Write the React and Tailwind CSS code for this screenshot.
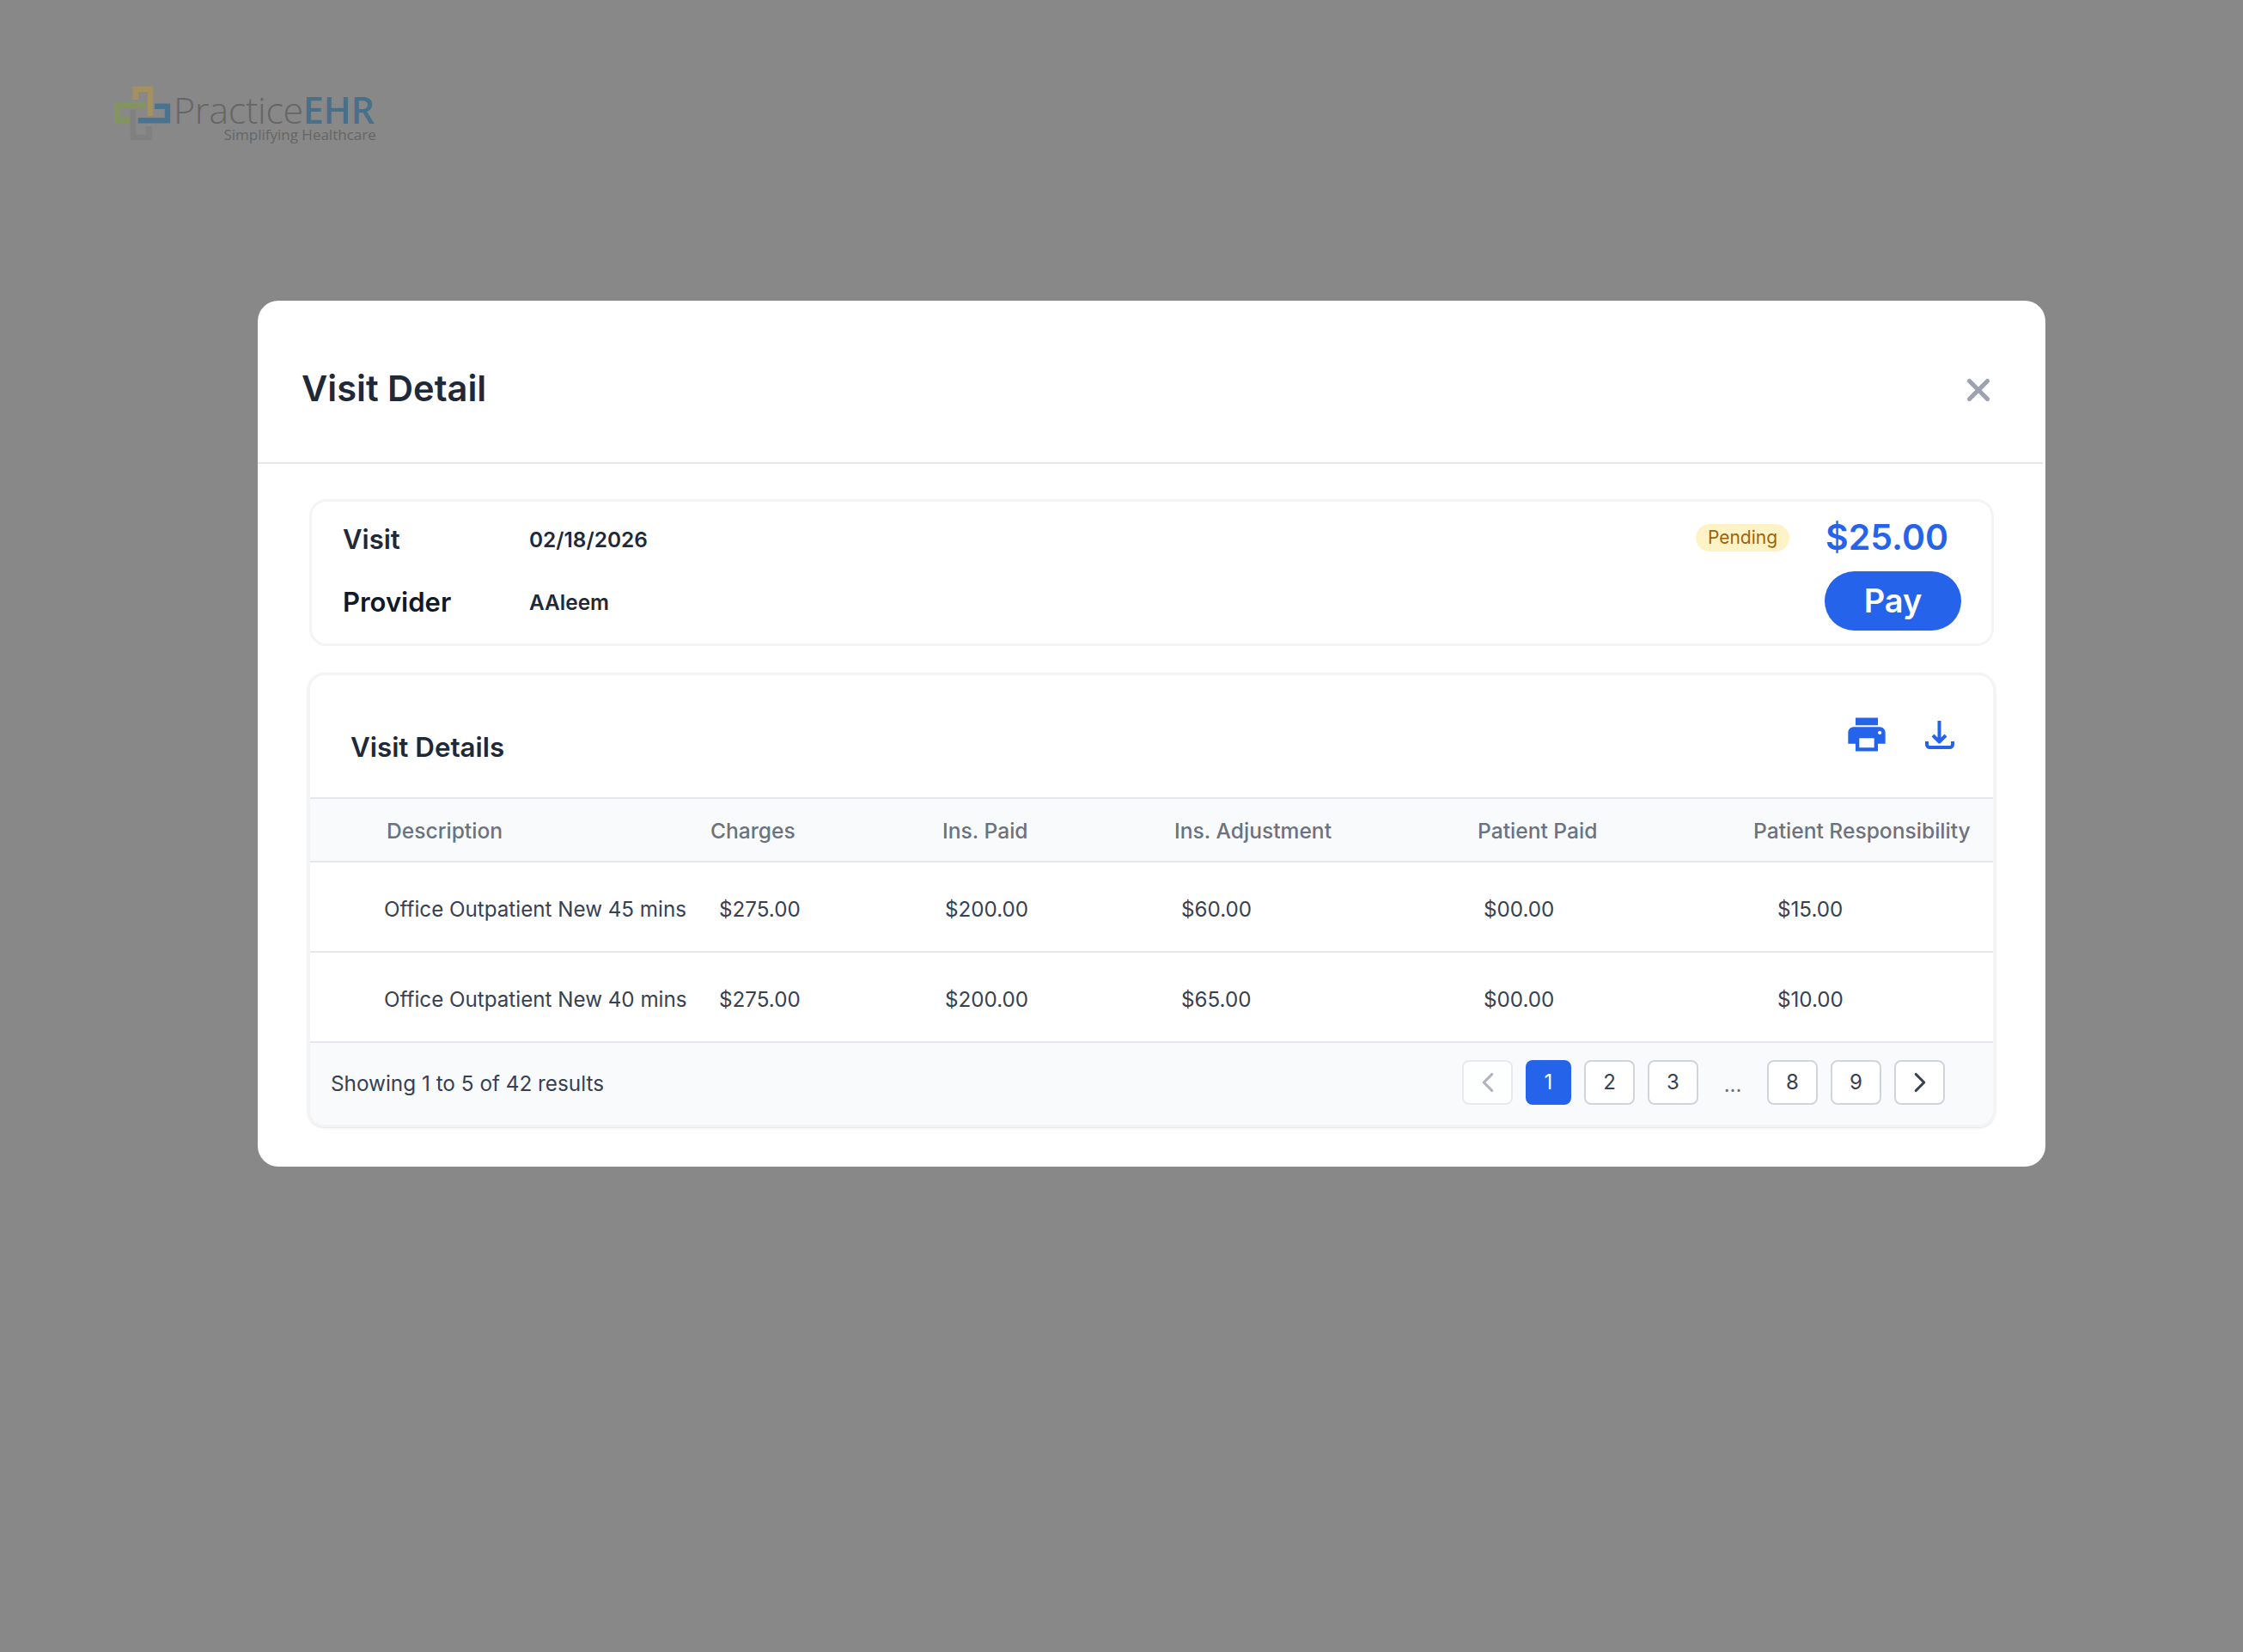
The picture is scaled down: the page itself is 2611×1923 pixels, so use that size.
import { ChevronLeft, ChevronRight, X } from "lucide-react";

const rows = [
  ["Office Outpatient New 45 mins", "$275.00", "$200.00", "$60.00", "$00.00", "$15.00"],
  ["Office Outpatient New 40 mins", "$275.00", "$200.00", "$65.00", "$00.00", "$10.00"],
];

const headers = ["Description", "Charges", "Ins. Paid", "Ins. Adjustment", "Patient Paid", "Patient Responsibility"];

// body cells sit a little off from their header, same as the design
const cellOffsets = ["ml-[-3px]", "ml-[10px]", "ml-[3px]", "ml-[8px]", "ml-[7px]", "ml-[28px]"];

function Logo() {
  return (
    <div className="flex items-start h-[70px]">
      <svg width="66" height="64" viewBox="133 100 66 64" fill="none" strokeWidth="6.5" className="shrink-0">
        <path d="M157.7 116V103.7H175V135" stroke="#a5905f" />
        <path d="M170 122.7H136.7V139.7H151" stroke="#84945f" />
        <path d="M155 127.7V160.3H173.3V147" stroke="#808080" />
        <path d="M180 123.7H195V140.3H160.7" stroke="#4a7390" />
      </svg>
      <div className="ml-[3px] flex flex-col items-end mt-[8px] font-['Open_Sans',sans-serif]">
        <div className="text-[43px] leading-[40px] font-light tracking-[-0.3px] text-[#666666] whitespace-nowrap">
          Practice<span className="font-semibold text-[#48708a]">EHR</span>
        </div>
        <div className="text-[17px] leading-[17px] mr-[-2px] text-[#666666] whitespace-nowrap">Simplifying Healthcare</div>
      </div>
    </div>
  );
}

function PageBtn({ children, active, muted }) {
  if (active) {
    return (
      <button className="w-[53px] h-[52px] rounded-[8px] bg-[#2563eb] text-white text-[24px] flex items-center justify-center">
        {children}
      </button>
    );
  }
  return (
    <button
      className={`w-[59px] h-[52px] rounded-[8px] border-2 bg-white text-[#374151] text-[24px] flex items-center justify-center ${
        muted ? "border-[#e5e7eb] opacity-80" : "border-[#d1d5db]"
      }`}
    >
      {children}
    </button>
  );
}

export default function App() {
  return (
    <div className="min-h-screen bg-[#888888] font-[Inter,sans-serif] pt-[100px] pl-[133px] overflow-hidden">
      <Logo />

      <div className="mt-[180px] ml-[167px] w-[2081px] h-[1008px] bg-white rounded-[24px]">
        {/* header */}
        <div className="h-[190px] mr-[3px] border-b-2 border-[#e5e7eb] flex items-start justify-between pl-[51px] pr-[54px]">
          <h2 className="mt-[78px] text-[41.6px] leading-[48px] font-semibold text-[#1f2937]">Visit Detail</h2>
          <X size={42} strokeWidth={3} className="mt-[83px] text-[#9ca3af]" />
        </div>

        <div className="pt-[41px] pl-[60px]">
          {/* visit summary */}
          <div className="w-[1961px] h-[171px] border-[3px] border-[#f3f4f6] rounded-[20px] flex justify-between pl-[36px] pr-[35px]">
            <div className="pt-[17px]">
              <div className="flex items-center h-[54px]">
                <div className="w-[217px] text-[31px] leading-[40px] font-semibold text-[#1f2937]">Visit</div>
                <div className="text-[24.4px] font-semibold text-[#1f2937]">02/18/2026</div>
              </div>
              <div className="flex items-center h-[54px] mt-[19px]">
                <div className="w-[217px] text-[31px] leading-[40px] font-semibold text-[#111827]">Provider</div>
                <div className="text-[24.4px] font-semibold text-[#1f2937]">AAleem</div>
              </div>
            </div>
            <div className="flex items-start pt-[26px]">
              <span className="mr-[41px] w-[109px] h-[32px] rounded-full bg-[#fef3c7] text-[#a16207] text-[21px] flex items-center justify-center">
                Pending
              </span>
              <div className="w-[159px]">
                <div className="ml-[1px] h-[32px] flex items-center text-[41px] font-semibold text-[#2563eb] whitespace-nowrap">$25.00</div>
                <button className="mt-[23px] w-[159px] h-[69px] rounded-full bg-[#2563eb] text-white text-[38px] font-semibold">Pay</button>
              </div>
            </div>
          </div>

          {/* visit details table */}
          <div className="mt-[31px] ml-[-2px] w-[1965px] h-[529px] border-[3px] border-[#f3f4f6] rounded-[20px] overflow-hidden shadow-sm">
            <div className="h-[142px] flex items-start justify-between pl-[47px] pr-[44px]">
              <h3 className="mt-[64px] text-[31.3px] leading-[40px] font-semibold text-[#1f2937]">Visit Details</h3>
              <div className="flex items-start mt-[39px]">
                <svg width="52" height="52" viewBox="0 0 24 24" fill="#2563eb" className="mt-[4px] mr-[41px]">
                  <path d="M19 8H5c-1.66 0-3 1.34-3 3v6h4v4h12v-4h4v-6c0-1.66-1.34-3-3-3zm-3 11H8v-5h8v5zm3-7c-.55 0-1-.45-1-1s.45-1 1-1 1 .45 1 1-.45 1-1 1zm-1-9H6v4h12V3z" />
                </svg>
                <svg width="36" height="36" viewBox="0 0 36 36" fill="none" stroke="#2563eb" strokeWidth="4" strokeLinejoin="round" className="mt-[13px]">
                  <path d="M3 25v3.5a3.5 3.5 0 0 0 3.5 3.5h23a3.5 3.5 0 0 0 3.5-3.5V25" />
                  <path d="M17.5 1v24M10 18l7.5 7.5L25 18" />
                </svg>
              </div>
            </div>

            <div className="border-t-2 border-b-2 border-[#e5e7eb] bg-[#f9fafb] h-[76px] pl-[89px] pt-[2px] grid grid-cols-[377px_270px_270px_353px_321px_1fr] items-center text-[24.6px] font-medium text-[#6b7280]">
              {headers.map((h) => (
                <div key={h} className="whitespace-nowrap">{h}</div>
              ))}
            </div>

            {rows.map((row) => (
              <div
                key={row[0]}
                className="border-b-2 border-[#e5e7eb] h-[105px] pl-[89px] pt-[7px] grid grid-cols-[377px_270px_270px_353px_321px_1fr] items-center text-[24.2px] text-[#374151]"
              >
                {row.map((cell, i) => (
                  <div key={i} className={`whitespace-nowrap ${cellOffsets[i]}`}>{cell}</div>
                ))}
              </div>
            ))}

            <div className="bg-[#f9fafb] h-[95px] flex items-start justify-between pl-[24px] pr-[56px]">
              <div className="mt-[31px] text-[24.3px] leading-[32px] text-[#374151]">Showing 1 to 5 of 42 results</div>
              <div className="flex items-center gap-[15px] mt-[20px]">
                <PageBtn muted><ChevronLeft size={38} strokeWidth={2} className="text-[#9ca3af]" /></PageBtn>
                <PageBtn active>1</PageBtn>
                <PageBtn>2</PageBtn>
                <PageBtn>3</PageBtn>
                <span className="w-[50px] text-center text-[24px] pt-[6px] text-[#6b7280]">...</span>
                <PageBtn>8</PageBtn>
                <PageBtn>9</PageBtn>
                <PageBtn><ChevronRight size={38} strokeWidth={2} className="text-[#374151]" /></PageBtn>
              </div>
            </div>
          </div>
        </div>
      </div>
    </div>
  );
}
